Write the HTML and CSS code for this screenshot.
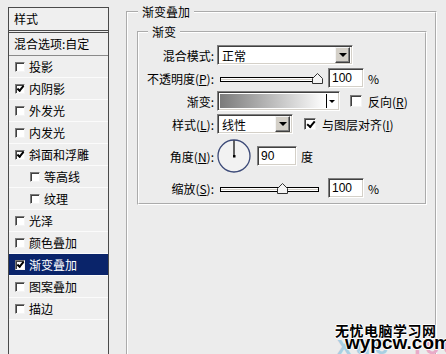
FILE: index.html
```html
<!DOCTYPE html>
<html lang="zh-CN">
<head>
    <meta charset="UTF-8">
    <meta name="viewport" content="width=device-width, initial-scale=1.0">
    <title>图层样式 - 渐变叠加</title>
    <link rel="stylesheet" href="styles.css">
</head>
<body>
    <div class="page">
        <aside class="styles-panel">
            <div class="panel-head">样式</div>
            <div class="panel-blend">混合选项:自定</div>
            <ul class="effect-list">
                <li><span class="cb"></span>投影</li>
                <li><span class="cb on"></span>内阴影</li>
                <li><span class="cb"></span>外发光</li>
                <li><span class="cb"></span>内发光</li>
                <li><span class="cb on"></span>斜面和浮雕</li>
                <li class="sub"><span class="cb"></span>等高线</li>
                <li class="sub"><span class="cb"></span>纹理</li>
                <li><span class="cb"></span>光泽</li>
                <li><span class="cb"></span>颜色叠加</li>
                <li class="active"><span class="cb on"></span>渐变叠加</li>
                <li><span class="cb"></span>图案叠加</li>
                <li><span class="cb"></span>描边</li>
            </ul>
        </aside>

        <main class="settings">
            <fieldset class="group outer">
                <legend>渐变叠加</legend>
                <fieldset class="group inner">
                    <legend>渐变</legend>
                    <div class="form">
                        <div class="row">
                            <label class="lbl">混合模式:</label>
                            <div class="select wide">
                                <span class="select-text">正常</span>
                                <span class="drop-btn"><i class="tri"></i></span>
                            </div>
                        </div>
                        <div class="row">
                            <label class="lbl">不透明度(<u>P</u>):</label>
                            <svg class="slider" width="106" height="20" viewBox="0 0 106 20">
                                <rect x="3.5" y="9.5" width="98" height="4" fill="#fff" stroke="#000"/>
                                <line x1="4" y1="11.5" x2="101" y2="11.5" stroke="#d4d0c8"/>
                                <path d="M95.5 15.5v-5l5-5 5 5v5z" fill="#f4f4f4" stroke="#333"/>
                            </svg>
                            <div class="field num">100</div>
                            <span class="unit">%</span>
                        </div>
                        <div class="row">
                            <label class="lbl">渐变:</label>
                            <div class="gradient">
                                <span class="gradient-fill"></span>
                                <span class="gradient-drop"><i class="tri small"></i></span>
                            </div>
                            <span class="cb big gap-r"></span>
                            <span class="check-text">反向(<u>R</u>)</span>
                        </div>
                        <div class="row">
                            <label class="lbl">样式(<u>L</u>):</label>
                            <div class="select narrow">
                                <span class="select-text">线性</span>
                                <span class="drop-btn"><i class="tri"></i></span>
                            </div>
                            <span class="cb big on gap-a"></span>
                            <span class="check-text">与图层对齐(<u>I</u>)</span>
                        </div>
                        <div class="row tall">
                            <label class="lbl">角度(<u>N</u>):</label>
                            <svg class="dial" width="34" height="36" viewBox="0 0 34 36">
                                <circle cx="17" cy="18" r="16" fill="#f2f2f2" stroke="#3c4a78" stroke-width="1.3"/>
                                <line x1="17" y1="18" x2="17" y2="2.5" stroke="#000" stroke-width="1.2"/>
                                <rect x="16" y="17" width="2.5" height="2.5" fill="#000"/>
                            </svg>
                            <div class="field num angle">90</div>
                            <span class="unit">度</span>
                        </div>
                        <div class="row">
                            <label class="lbl">缩放(<u>S</u>):</label>
                            <svg class="slider" width="106" height="20" viewBox="0 0 106 20">
                                <rect x="3.5" y="9.5" width="98" height="4" fill="#fff" stroke="#000"/>
                                <line x1="4" y1="11.5" x2="101" y2="11.5" stroke="#d4d0c8"/>
                                <path d="M60.5 15.5v-5l5-5 5 5v5z" fill="#f4f4f4" stroke="#333"/>
                            </svg>
                            <div class="field num">100</div>
                            <span class="unit">%</span>
                        </div>
                    </div>
                </fieldset>
            </fieldset>
        </main>
    </div>

    <div class="watermark">
        <span class="wm-back"><span class="wm-blue">xue</span><span class="wm-pink">.com</span></span>
        <span class="wm-cn">无忧电脑学习网</span>
        <span class="wm-en">wypcw.com</span>
    </div>
</body>
</html>
```

FILE: styles.css
```css
* {
    margin: 0;
    padding: 0;
    box-sizing: border-box;
}
body {
    background: #ececec;
    font-family: "Noto Sans CJK SC", "Noto Sans", sans-serif;
    font-size: 12px;
    color: #000;
    height: 354px;
    overflow: hidden;
    position: relative;
}
u {
    text-decoration: underline;
    text-underline-offset: 1px;
}
.page {
    display: flex;
    height: 354px;
}

/* left list of effects */
.styles-panel {
    margin: 7px 0 0 8px;
    width: 101px;
    height: 360px;
    border: 1px solid #4a4a4a;
    border-bottom: none;
    background: #efefef;
}
.panel-head {
    height: 23px;
    line-height: 22px;
    padding-left: 5px;
    border-bottom: 1px solid #4a4a4a;
}
.panel-blend {
    margin-top: 1px;
    height: 24px;
    line-height: 22px;
    padding-left: 5px;
    border-top: 1px solid #4a4a4a;
    border-bottom: 1px solid #8a8a8a;
}
.effect-list {
    list-style: none;
}
.effect-list li {
    height: 22px;
    display: flex;
    align-items: center;
    padding-left: 6px;
    border-bottom: 1px solid #fbfbfb;
}
.effect-list li.sub {
    padding-left: 21px;
}
.effect-list li.active {
    background: #0a246a;
    color: #fff;
}
.effect-list .cb {
    margin-right: 4px;
}

/* checkbox */
.cb {
    position: relative;
    flex: none;
    width: 10px;
    height: 10px;
    background: #fff;
    border: 1px solid;
    border-color: #7a7a7a #f4f4f4 #f4f4f4 #7a7a7a;
    box-shadow: inset 1px 1px 0 #404040;
}
.cb.big {
    width: 12px;
    height: 12px;
}
.cb.on::after {
    content: "";
    position: absolute;
    left: 1px;
    top: 1px;
    width: 5px;
    height: 2px;
    border-left: 2px solid #000;
    border-bottom: 2px solid #000;
    transform: rotate(-50deg);
}
.cb.big.on::after {
    left: 2px;
    top: 2px;
    width: 6px;
    height: 3px;
}

/* right settings */
.settings {
    margin-left: 17px;
    padding-top: 5px;
}
.group {
    border: 2px groove #fff;
    min-width: 0;
}
.group legend {
    line-height: 14px;
    padding: 0 4px;
}
.outer {
    width: 311px;
    height: 380px;
    padding: 6px 8px 0 9px;
}
.outer > legend {
    margin-left: 1px;
}
.inner {
    width: 290px;
    padding: 6px 0 5px 0;
}
.inner > legend {
    margin-left: 9px;
}
.form {
    display: flex;
    flex-direction: column;
    gap: 3px;
}
.row {
    display: flex;
    align-items: center;
    height: 20px;
}
.row.tall {
    height: 38px;
}
.lbl {
    width: 75px;
    margin-right: 3px;
    text-align: right;
    white-space: nowrap;
}

/* sunken fields */
.select,
.field,
.gradient {
    height: 20px;
    background: #fff;
    border: 1px solid;
    border-color: #808080 #fff #fff #808080;
    box-shadow: inset 1px 1px 0 #404040, inset -1px -1px 0 #d4d0c8;
}
.select {
    display: flex;
    align-items: center;
    justify-content: space-between;
    padding: 2px 2px 2px 4px;
}
.select.wide {
    width: 136px;
}
.select.narrow {
    width: 76px;
}
.drop-btn {
    width: 15px;
    height: 16px;
    display: flex;
    align-items: center;
    justify-content: center;
    background: #d4d0c8;
    border: 1px solid;
    border-color: #f4f4f4 #404040 #404040 #f4f4f4;
    box-shadow: inset -1px -1px 0 #808080;
}
.tri {
    width: 0;
    height: 0;
    border-left: 4px solid transparent;
    border-right: 4px solid transparent;
    border-top: 4px solid #000;
}
.tri.small {
    border-left-width: 3px;
    border-right-width: 3px;
    border-top-width: 3px;
}

.slider {
    flex: none;
    margin-right: 5px;
}
.field {
    font-family: "Liberation Sans", Arial, sans-serif;
    line-height: 18px;
    padding-left: 3px;
}
.num {
    width: 36px;
}
.num.angle {
    width: 40px;
    margin-left: 6px;
}
.unit {
    margin-left: 4px;
}

.gradient {
    width: 123px;
    display: flex;
    padding: 2px;
}
.gradient-fill {
    flex: 1;
    background: linear-gradient(to right, #7b7b7b, #fff);
}
.gradient-drop {
    width: 11px;
    display: flex;
    align-items: center;
    justify-content: center;
    border-left: 1px solid #000;
    background: #fff;
}
.gap-r {
    margin-left: 10px;
}
.gap-a {
    margin-left: 11px;
}
.check-text {
    margin-left: 6px;
    white-space: nowrap;
}
.dial {
    flex: none;
}

/* site watermark */
.watermark {
    position: absolute;
    left: 333px;
    top: 318px;
    width: 113px;
    height: 36px;
}
.wm-back {
    position: absolute;
    left: 4px;
    top: 13px;
    font-family: "Liberation Sans", Arial, sans-serif;
    font-size: 25px;
    font-weight: bold;
    letter-spacing: 4px;
    white-space: nowrap;
}
.wm-blue {
    color: #a9cfe2;
}
.wm-pink {
    color: #e9aac8;
    margin-left: 22px;
}
.wm-cn {
    position: absolute;
    left: 2px;
    top: 2px;
    font-size: 14px;
    font-weight: bold;
    letter-spacing: 0.5px;
    white-space: nowrap;
    text-shadow: 1px 0 #fff, -1px 0 #fff, 0 1px #fff, 0 -1px #fff;
}
.wm-en {
    position: absolute;
    left: 12px;
    top: 15px;
    font-family: "Liberation Sans", Arial, sans-serif;
    font-size: 19px;
    font-weight: bold;
    line-height: 20px;
    white-space: nowrap;
    text-shadow: 1px 0 #fff, -1px 0 #fff, 0 1px #fff, 0 -1px #fff;
}
```
